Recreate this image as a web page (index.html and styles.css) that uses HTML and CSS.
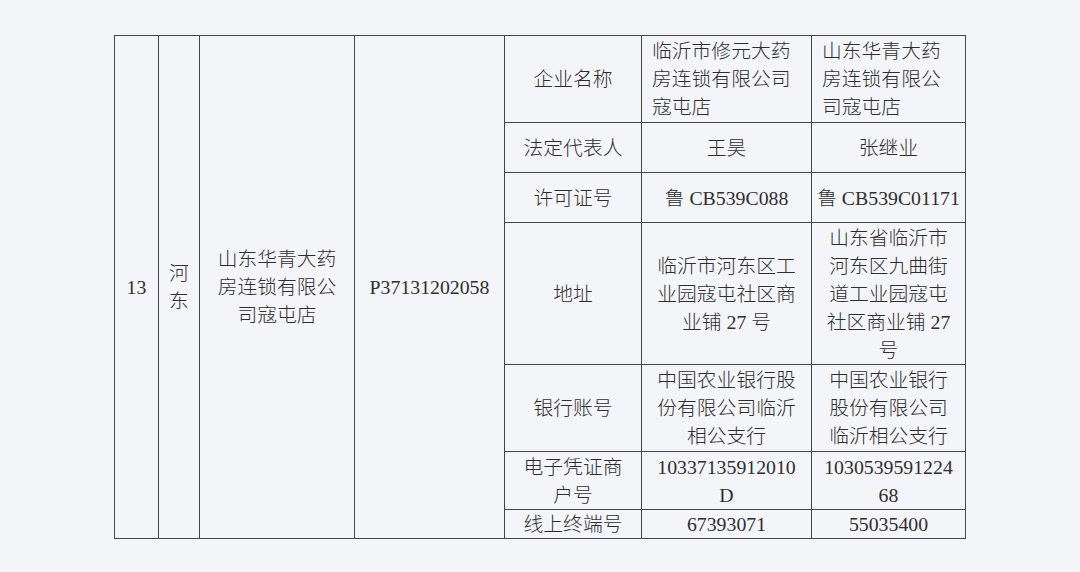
FILE: index.html
```html
<!DOCTYPE html>
<html lang="zh">
<head>
<meta charset="utf-8">
<link rel="stylesheet" href="styles.css">
</head>
<body>
<div class="page">
<table class="grid">
  <colgroup>
    <col class="c1"><col class="c2"><col class="c3"><col class="c4"><col class="c5"><col class="c6"><col class="c7">
  </colgroup>
  <tr class="r1">
    <td rowspan="7">13</td>
    <td rowspan="7" class="vert">河<br>东</td>
    <td rowspan="7">山东华青大药<br>房连锁有限公<br>司寇屯店</td>
    <td rowspan="7">P37131202058</td>
    <td>企业名称</td>
    <td class="left">临沂市修元大药<br>房连锁有限公司<br>寇屯店</td>
    <td class="left">山东华青大药<br>房连锁有限公<br>司寇屯店</td>
  </tr>
  <tr class="r2">
    <td>法定代表人</td>
    <td>王昊</td>
    <td>张继业</td>
  </tr>
  <tr class="r3">
    <td>许可证号</td>
    <td>鲁 CB539C088</td>
    <td>鲁 CB539C01171</td>
  </tr>
  <tr class="r4">
    <td>地址</td>
    <td>临沂市河东区工<br>业园寇屯社区商<br>业铺 27 号</td>
    <td>山东省临沂市<br>河东区九曲街<br>道工业园寇屯<br>社区商业铺 27<br>号</td>
  </tr>
  <tr class="r5">
    <td>银行账号</td>
    <td>中国农业银行股<br>份有限公司临沂<br>相公支行</td>
    <td>中国农业银行<br>股份有限公司<br>临沂相公支行</td>
  </tr>
  <tr class="r6">
    <td>电子凭证商<br>户号</td>
    <td>10337135912010<br>D</td>
    <td>1030539591224<br>68</td>
  </tr>
  <tr class="r7">
    <td>线上终端号</td>
    <td>67393071</td>
    <td>55035400</td>
  </tr>
</table>
</div>
</body>
</html>
```

FILE: styles.css
```css
html, body {
  margin: 0;
  padding: 0;
  background: #f4f5f9;
}
body {
  width: 1080px;
  height: 572px;
  overflow: hidden;
  font-family: "Liberation Serif", "Noto Sans CJK SC", serif;
  font-size: 19.8px;
  color: #2e2e2e;
}
.page {
  padding: 35px 0 0 114px;
}
.grid {
  border-collapse: collapse;
  table-layout: fixed;
  width: 851px;
}
.grid td {
  border: 1.5px solid #474747;
  text-align: center;
  vertical-align: middle;
  line-height: 28px;
  padding: 0;
  font-weight: 300;
  overflow: hidden;
  white-space: nowrap;
}
.grid td.left {
  text-align: left;
  padding-left: 10px;
}
.c1 { width: 44px; }
.c2 { width: 41px; }
.c3 { width: 155px; }
.c4 { width: 150px; }
.c5 { width: 137px; }
.c6 { width: 170px; }
.c7 { width: 154px; }
.r1 { height: 87px; }
.r2 { height: 50px; }
.r3 { height: 50px; }
.r4 { height: 142px; }
.r5 { height: 87px; }
.r6 { height: 58px; }
.r7 { height: 29px; }
```
